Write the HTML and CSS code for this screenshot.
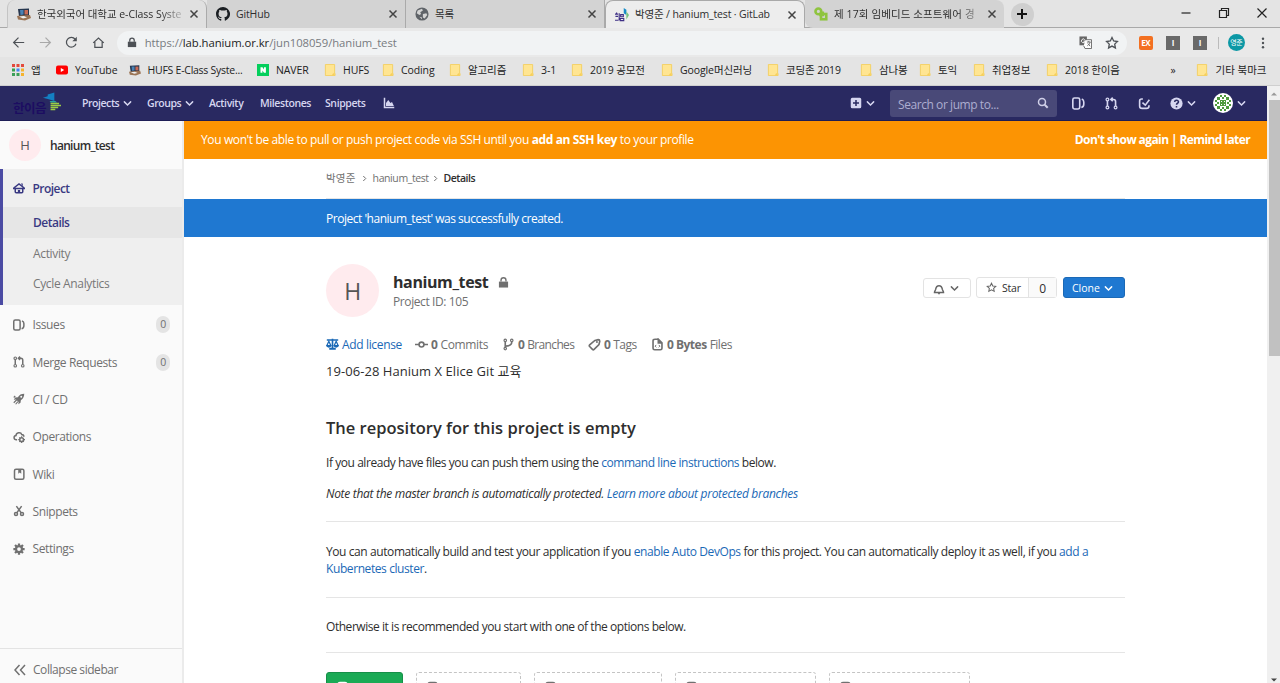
FILE: index.html
```html
<!DOCTYPE html>
<html lang="ko">
<head>
<meta charset="utf-8">
<title>박영준 / hanium_test · GitLab</title>
<link rel="stylesheet" href="styles.css">
</head>
<body>
<svg class="defs" width="0" height="0" aria-hidden="true">
  <symbol id="x" viewBox="0 0 10 10"><path d="M1.500 1.500l7 7M8.500 1.500l-7 7" class="ln w15"/></symbol>
  <symbol id="chev" viewBox="0 0 10 10"><path d="M1.500 3.200L5 6.700l3.500-3.500" class="ln round"/></symbol>
  <symbol id="right" viewBox="0 0 6 8"><path d="M1.500 1l3 3-3 3" class="ln"/></symbol>
  <symbol id="lock" viewBox="0 0 12 12"><path d="M1 5h10v6.500H1z"/><path d="M3.300 5V3.500a2.700 2.700 0 0 1 5.400 0V5" class="ln w15"/></symbol>
  <symbol id="folder" viewBox="0 0 12 13"><path d="M1 .5h10v9.500l.5.5v2H1z" fill="#ffe592" stroke="#f3cf61"/><path d="M9 10.500l2-1v3H8z" fill="#f6cf5c"/></symbol>
  <symbol id="hufs" viewBox="0 0 14 14"><path d="M1 2l11-.5V9L2 9.500z" fill="#26364e"/><path d="M3 3h3.500v4.500L3.500 8z" fill="#4a82b5"/><path d="M7.500 3H11v4.500H7.500z" fill="#c96a55"/><path d="M0 9l4-.5 9-.5 1 3-6 2.500-7-1z" fill="#9b7455"/><path d="M2 9.500l5-.5 3 1.500-4 1z" fill="#eee"/></symbol>
  <symbol id="issues" viewBox="0 0 16 16"><rect x="1" y="1.300" width="8.500" height="13.400" rx="2" class="ln w2"/><path d="M12 2.500c2.500 1 2.500 2 2.500 3.500v3c0 2-1 3.500-3 4" class="ln w2"/></symbol>
  <symbol id="merge" viewBox="0 0 16 16"><circle cx="3" cy="3" r="1.700" class="ln w15"/><circle cx="3" cy="13" r="1.700" class="ln w15"/><circle cx="13" cy="13" r="1.700" class="ln w15"/><path d="M3 5v6M13 11V5.500C13 4 12 3 10.500 3H8M9.500.800L7.200 3l2.300 2.200" class="ln w2"/></symbol>
  <symbol id="star" viewBox="0 0 16 16"><path d="M8 1.800l1.900 3.900 4.300.6-3.100 3 .8 4.300L8 11.500l-3.900 2.100.8-4.300-3.100-3 4.300-.6z" class="ln w15"/></symbol>
  <symbol id="doc" viewBox="0 0 16 16"><path d="M2 5c0-2 1-3 3-3h6c2 0 3 1 3 3v6c0 2-1 3-3 3H5c-2 0-3-1-3-3z" class="ln w2"/></symbol>
</svg>

<header class="chrome">
  <div class="tabs">
    <div class="tab first"><svg class="fav"><use href="#hufs"/></svg><span class="tt fade">한국외국어 대학교 e-Class Syste</span><svg class="cls"><use href="#x"/></svg></div>
    <div class="tab"><svg class="fav" viewBox="0 0 16 16"><path fill="#1b1f23" d="M8 0C3.580 0 0 3.580 0 8c0 3.540 2.290 6.530 5.470 7.590.4.070.55-.17.55-.38v-1.490c-2.010.37-2.530-.49-2.690-.94-.09-.23-.48-.94-.82-1.130-.28-.15-.68-.52-.01-.53.630-.01 1.080.58 1.230.82.72 1.210 1.870.87 2.330.66.07-.52.28-.87.51-1.070-1.780-.2-3.640-.89-3.640-3.950 0-.87.310-1.590.82-2.150-.08-.2-.36-1.020.080-2.120 0 0 .67-.21 2.200.82a7.600 7.600 0 0 1 4 0c1.530-1.040 2.200-.82 2.200-.82.44 1.100.16 1.920.08 2.120.51.56.82 1.270.82 2.150 0 3.070-1.870 3.750-3.650 3.950.29.25.54.73.54 1.480v2.200c0 .21.150.46.550.38A8 8 0 0 0 8 0z"/></svg><span class="tt">GitHub</span><svg class="cls"><use href="#x"/></svg></div>
    <div class="tab"><svg class="fav" viewBox="0 0 16 16"><circle cx="8" cy="8" r="7.500" fill="#5f6368"/><path d="M3 4l5-2 1 2-3 2 1 2-2 1-3-2zM9 8l4-1 1 2-3 4-2-1zM5 11l3 1v2z" fill="#d4d4d4"/></svg><span class="tt">목록</span><svg class="cls"><use href="#x"/></svg></div>
    <div class="tab active"><svg class="fav" viewBox="0 0 16 16"><path d="M0 7h3.500M1.800 5v2M.5 9.500h3M0 14h4M4.800 6v8M6.500 7.500h3v2.500h-3zM6 12h4v2.500H6z" fill="none" stroke="#3e2f85" stroke-width="1.300"/><path d="M10 0l3 2v6l-3-2z" fill="#178cc8"/><path d="M13 4l3 4-3 5z" fill="#78c27d"/></svg><span class="tt">박영준 / hanium_test · GitLab</span><svg class="cls"><use href="#x"/></svg></div>
    <div class="tab last"><svg class="fav" viewBox="0 0 16 16"><circle cx="5" cy="5" r="3.300" class="gr"/><rect x="8" y="8" width="6" height="6" class="gr"/><path d="M6 9h4V5" class="gr"/></svg><span class="tt fade">제 17회 임베디드 소프트웨어 경</span><svg class="cls"><use href="#x"/></svg></div>
    <div class="plus"><svg viewBox="0 0 12 12"><path d="M6 1v10M1 6h10" class="ln w2"/></svg></div>
    <div class="win"><svg viewBox="0 0 12 12"><path d="M1.500 6h9" class="ln"/></svg><svg viewBox="0 0 12 12"><path d="M1.500 3.500h7v7h-7zM3.500 3.500v-2h7v7h-2" class="ln"/></svg><svg viewBox="0 0 12 12"><path d="M1.500 1.500l9 9M10.500 1.500l-9 9" class="ln"/></svg></div>
  </div>
  <div class="toolbar">
    <svg class="tb" viewBox="0 0 16 16"><path d="M15 8H2M8 2L2 8l6 6" class="ln w15"/></svg>
    <svg class="tb dim" viewBox="0 0 16 16"><path d="M1 8h13M8 2l6 6-6 6" class="ln w15"/></svg>
    <svg class="tb" viewBox="0 0 16 16"><path d="M13.500 9.500A6 6 0 1 1 12.500 4" class="ln w15"/><path d="M14.500 1v5.500H9z"/></svg>
    <svg class="tb" viewBox="0 0 16 16"><path d="M1.500 8.500L8 2.500l6.500 6M3.500 7.500v6.500h9V7.500" class="ln w15"/></svg>
    <div class="omni"><svg class="lk"><use href="#lock"/></svg><span class="url">https://<b>lab.hanium.or.kr</b>/jun108059/hanium_test</span>
      <svg class="tr" viewBox="0 0 14 14"><rect x=".5" y=".5" width="8" height="9.500" fill="#666"/><path d="M7 4h6.500v9.500H6.500L5 10.500" fill="#fff" stroke="#666"/><path d="M6.200 4A2 2 0 1 0 6.600 5.500H4.800" fill="none" stroke="#fff"/><path d="M8.500 6.500h4M10.500 5.500v1M12 6.500c-.5 2-1.500 3-3 4M9.500 8l2.500 3" fill="none" stroke="#666"/></svg>
      <svg class="st"><use href="#star"/></svg></div>
    <span class="ext or">EX</span><span class="ext">I</span><span class="ext">I</span><i class="sep"></i><span class="me">영준</span><svg class="dots" viewBox="0 0 4 14"><circle cx="2" cy="2" r="1.400"/><circle cx="2" cy="7" r="1.400"/><circle cx="2" cy="12" r="1.400"/></svg>
  </div>
  <div class="marks">
    <div><svg viewBox="0 0 12 12"><path d="M0 0h3v3H0zM4.500 0h3v3h-3zM9 0h3v3H9z" fill="#e34a3d"/><path d="M0 4.500h3v3H0z" fill="#34a24f"/><path d="M4.500 4.500h3v3h-3z" fill="#4285f4"/><path d="M9 4.500h3v3H9zM9 9h3v3H9z" fill="#f5b32d"/><path d="M0 9h3v3H0zM4.500 9h3v3h-3z" fill="#3c9f59"/></svg>앱</div>
    <div><svg viewBox="0 0 12 12"><rect y="1.500" width="12" height="9" rx="2" fill="#f00"/><path d="M4.800 4v4L8.200 6z" fill="#fff"/></svg>YouTube</div>
    <div class="hu"><svg><use href="#hufs"/></svg>HUFS E-Class Syste...</div>
    <div><svg viewBox="0 0 12 12"><path d="M0 0h12v12H0z" fill="#04cf5c"/><path d="M3.500 3.200h2l1.500 2.300V3.200h1.900v5.600H7L5.400 6.500v2.300H3.500z" fill="#fff"/></svg>NAVER</div>
    <div><svg><use href="#folder"/></svg>HUFS</div>
    <div><svg><use href="#folder"/></svg>Coding</div>
    <div><svg><use href="#folder"/></svg>알고리즘</div>
    <div><svg><use href="#folder"/></svg>3-1</div>
    <div><svg><use href="#folder"/></svg>2019 공모전</div>
    <div><svg><use href="#folder"/></svg>Google머신러닝</div>
    <div><svg><use href="#folder"/></svg>코딩존 2019</div>
    <div><svg><use href="#folder"/></svg>삼나봉</div>
    <div><svg><use href="#folder"/></svg>토익</div>
    <div><svg><use href="#folder"/></svg>취업정보</div>
    <div><svg><use href="#folder"/></svg>2018 한이음</div>
    <div>»</div>
    <div class="other"><svg><use href="#folder"/></svg>기타 북마크</div>
  </div>
</header>

<div class="view">
  <div class="page">
    <nav class="navbar">
      <div class="logo"><span>한이음</span><svg viewBox="0 0 20 20"><path d="M1 5.500L6 4V2l7-2v9L7 7z" fill="#147fc2"/><path d="M8 9h6l2 1.500H9z" fill="#2aa39b"/><path d="M9 11.500h9M9 13.700h11M9 15.900h8M9 18h5" stroke="#9bcb45" stroke-width="1.600"/></svg></div>
      <a class="n1">Projects <svg><use href="#chev"/></svg></a>
      <a class="n2">Groups <svg><use href="#chev"/></svg></a>
      <a class="n3">Activity</a>
      <a class="n4">Milestones</a>
      <a class="n5">Snippets</a>
      <svg class="chart" viewBox="0 0 16 16"><path d="M1 1h2v12h12v2H1z"/><path d="M4 12V8l3-4 3 4 2-1.500 2.500 5.500z"/></svg>
      <div class="add"><svg viewBox="0 0 16 16"><path d="M3 1h10a2 2 0 0 1 2 2v10a2 2 0 0 1-2 2H3a2 2 0 0 1-2-2V3a2 2 0 0 1 2-2zm4 3v3H4v2h3v3h2V9h3V7H9V4z"/></svg><svg class="c"><use href="#chev"/></svg></div>
      <div class="search"><span>Search or jump to...</span><svg viewBox="0 0 12 12"><circle cx="5" cy="5" r="3.500" class="ln w15"/><path d="M7.700 7.700l3 3" class="ln w2"/></svg></div>
      <div class="icons">
        <svg><use href="#issues"/></svg><svg><use href="#merge"/></svg>
        <svg viewBox="0 0 16 16"><path d="M6 2.500H4.500c-2 0-2.500 1-2.500 2.500v6c0 2 1 3 3 3h5.500c2 0 3-1 3-3v-1M5.500 7l3.500 3 5-6.500" class="ln w2"/></svg>
        <svg viewBox="0 0 16 16"><circle cx="8" cy="8" r="7.500"/><path d="M5.700 6.200c.2-3 4.900-2.700 4.700 0C10.300 7.800 8 7.600 8 9.500M8 11v1.800" fill="none" stroke="#292961" stroke-width="1.900"/></svg>
        <svg class="c"><use href="#chev"/></svg>
        <svg class="av" viewBox="0 0 20 20"><circle cx="10" cy="10" r="10" fill="#fff"/><path d="M7 2h2v2H7zM11 2h2v2h-2zM2 7h2v2H2zM2 11h2v2H2zM16 7h2v2h-2zM16 11h2v2h-2zM7 16h2v2H7zM11 16h2v2h-2zM7 7h6v6H7zM4 4h3v3H4zM13 4h3v3h-3zM4 13h3v3H4zM13 13h3v3h-3zM9 4h2v2H9zM9 14h2v2H9zM4 9h2v2H4zM14 9h2v2h-2z" fill="#4f9a3e"/><path d="M8 8h1v1H8zM11 8h1v1h-1zM8 11h1v1H8zM11 11h1v1h-1z" fill="#fff"/></svg>
        <svg class="c"><use href="#chev"/></svg>
      </div>
    </nav>
    <div class="body">
      <aside>
        <div class="ctx"><span class="ava">H</span><b>hanium_test</b></div>
        <div class="sect">
          <a class="top"><svg viewBox="0 0 16 16"><path d="M0 8.500h16M1 8l7-5.500L15 8M3 8v5q0 1.300 1.300 1.300h7.400Q13 14.300 13 13V8" class="ln w2"/><path d="M6.500 10.500h3v3.500h-3zM10.500 2H13v4z"/></svg>Project</a>
          <a class="sub on">Details</a><a class="sub">Activity</a><a class="sub">Cycle Analytics</a>
        </div>
        <a class="item"><svg><use href="#issues"/></svg>Issues<i>0</i></a>
        <a class="item"><svg><use href="#merge"/></svg>Merge Requests<i>0</i></a>
        <a class="item"><svg viewBox="0 0 16 16"><path d="M15 1c-4 0-6.500 1.500-8.500 4.500L3 6 1 9l3-.5L7.500 12 7 15l3-2 .5-3.500C13.500 7.500 15 5 15 1zm-4 2.700a1.300 1.300 0 1 1 0 2.600 1.300 1.300 0 0 1 0-2.600z"/><path d="M1 13l4-4M3.500 15l3-3.500M1 6l2-2" class="ln w15"/></svg>CI / CD</a>
        <a class="item"><svg viewBox="0 0 16 16"><path d="M5.500 11.500H4.500C.5 11.500.5 6.500 4 6c0-4 6.500-5 7.500-1.500 2 0 3 1 3 3" class="ln w2"/><circle cx="11.500" cy="11.500" r="2.500" class="ln w2"/><path d="M11.500 7v2M11.500 14v2M7 11.500h2M14 11.500h2M8.500 8.500l1 1M13.500 13.500l1 1M8.500 14.500l1-1" class="ln w15"/></svg>Operations</a>
        <a class="item"><svg viewBox="0 0 16 16"><rect x="2" y="1.500" width="12.500" height="13.500" rx="2" class="ln w2"/><path d="M7 2h4v5.500L9 6 7 7.500z"/></svg>Wiki</a>
        <a class="item"><svg viewBox="0 0 16 16"><circle cx="4" cy="12" r="2" class="ln w2"/><circle cx="12" cy="12" r="2" class="ln w2"/><path d="M5 10.500L11.500 1.500M11 10.500L4.500 1.500" class="ln w2"/></svg>Snippets</a>
        <a class="item"><svg viewBox="0 0 16 16"><circle cx="8" cy="8" r="4" class="ln w3"/><path d="M8 .5v3M8 12.500v3M.5 8h3M12.500 8h3M2.700 2.700l2 2M11.300 11.300l2 2M2.700 13.300l2-2M11.300 4.700l2-2" class="ln w3"/></svg>Settings</a>
        <a class="collapse"><svg viewBox="0 0 12 12"><path d="M5.500 1L1 6l4.500 5M11 1L6.500 6l4.500 5" class="ln w15"/></svg>Collapse sidebar</a>
      </aside>
      <main>
        <div class="ssh"><span>You won't be able to pull or push project code via SSH until you <b>add an SSH key</b> to your profile</span><b class="rm">Don't show again | Remind later</b></div>
        <div class="crumbs"><span>박영준</span><svg><use href="#right"/></svg><span>hanium_test</span><svg><use href="#right"/></svg><b>Details</b></div>
        <div class="flash">Project 'hanium_test' was successfully created.</div>
        <div class="content">
          <div class="head">
            <span class="big">H</span>
            <div class="ttl"><h1>hanium_test <svg><use href="#lock"/></svg></h1><p>Project ID: 105</p></div>
            <div class="btns">
              <span class="btn bell"><svg viewBox="0 0 16 16"><path d="M2 12.500c0-1.500 1-2 1.500-4C4 5.500 5.500 3.500 8 3.500s4 2 4.500 5c.5 2 1.500 2.500 1.500 4z" class="ln w2"/><path d="M6 13h4l-2 2.500z"/></svg><svg class="c"><use href="#chev"/></svg></span>
              <span class="btn star"><svg><use href="#star"/></svg><em>Star</em><i>0</i></span>
              <span class="btn clone">Clone <svg class="c"><use href="#chev"/></svg></span>
            </div>
          </div>
          <div class="stats">
            <span class="lic"><svg viewBox="0 0 16 16"><path d="M1 1.500h14v2H1zM7 1h2v11h3v2.500H4V12h3z"/><path d="M3.500 4L1 9.500h5zM12.500 4L10 9.500h5z" class="ln w15"/><path d="M0 9h7q-1 3-3.500 3T0 9zM9 9h7q-1 3-3.500 3T9 9z"/></svg>Add license</span>
            <span class="com"><svg viewBox="0 0 16 16"><circle cx="8" cy="8" r="3" class="ln w2"/><path d="M0 8h5M11 8h5" class="ln w2"/></svg><b>0</b> Commits</span>
            <span class="bra"><svg viewBox="0 0 16 16"><circle cx="4" cy="3" r="1.500" class="ln w15"/><circle cx="12" cy="3" r="1.500" class="ln w15"/><circle cx="4" cy="13" r="1.500" class="ln w15"/><path d="M4 5v6M4 10c5 0 8-2 8-5" class="ln w2"/></svg><b>0</b> Branches</span>
            <span class="tag"><svg viewBox="0 0 16 16"><path d="M8.500 3l4-1q2 0 2 2l-1 4-6 6q-1 1-2 0L2 10.500q-1-1 0-2z" class="ln w2"/><circle cx="11" cy="5" r="1.200"/></svg><b>0</b> Tags</span>
            <span class="fil"><svg viewBox="0 0 16 16"><path d="M9 1.500H5q-2.500 0-2.500 2v9q0 2 2 2h7q2 0 2-2V6L9 1.500V6h4" class="ln w2"/><path d="M6.500 8.500L5 10l1.500 1.500M9.500 8.500L11 10l-1.500 1.500" class="ln"/></svg><b>0 Bytes</b> Files</span>
          </div>
          <p class="desc">19-06-28 Hanium X Elice Git 교육</p>
          <h2>The repository for this project is empty</h2>
          <p class="p1">If you already have files you can push them using the <a>command line instructions</a> below.</p>
          <p class="p2">Note that the master branch is automatically protected. <a>Learn more about protected branches</a></p>
          <p class="p3">You can automatically build and test your application if you <a>enable Auto DevOps</a> for this project. You can automatically deploy it as well, if you <a>add a<br>Kubernetes cluster</a>.</p>
          <p class="p4">Otherwise it is recommended you start with one of the options below.</p>
          <div class="opts">
            <span class="new"><svg><use href="#doc"/></svg>New file</span>
            <span><svg><use href="#doc"/></svg>Add README</span>
            <span><svg><use href="#doc"/></svg>Add CHANGELOG</span>
            <span><svg><use href="#doc"/></svg>Add CONTRIBUTING</span>
            <span><svg><use href="#doc"/></svg>Add Kubernetes</span>
          </div>
        </div>
      </main>
    </div>
  </div>
  <div class="scroll"><svg viewBox="0 0 8 5"><path d="M0 4.500L4 .5l4 4z"/></svg><div></div><svg class="dn" viewBox="0 0 8 5"><path d="M0 .5l4 4 4-4z"/></svg></div>
</div>
</body>
</html>
```
FILE: styles.css
```css
* { box-sizing: border-box; }
html, body { margin: 0; height: 683px; overflow: hidden; }
body { font: 12px/17px "Open Sans", "Noto Sans CJK KR", sans-serif; color: #2e2e2e; letter-spacing: -.4px; background: #fff; display: flex; flex-direction: column; }
.defs { position: absolute; }
svg { fill: currentColor; flex: none; }
.ln { fill: none; stroke: currentColor; stroke-width: 1.2; }
.round { stroke-width: 1.6; stroke-linecap: round; }
.w15 { stroke-width: 1.5; }
.w2 { stroke-width: 2; }
.w3 { stroke-width: 3; }
.gr { fill: none; stroke: #8fc43f; stroke-width: 3; }
p, h1, h2 { margin: 0; }
i, em { font-style: normal; }

.chrome { height: 86px; flex: none; background: #e4e4e4; border-bottom: 1px solid #cfcfcf; }
.tabs { height: 28px; display: grid; grid-template-columns: 200px 199px 199px 200px 199px 36px 1fr; padding-left: 7px; border-bottom: 1px solid #a9a9a9; }
.tab { display: grid; grid-template-columns: 14px 1fr 10px; column-gap: 6px; align-items: center; padding: 0 7px 0 9px; background: #d3d3d3; border-right: 1px solid #aaa; font-size: 10.5px; letter-spacing: -.1px; }
.tab.first { background: #e0e0e0; border-left: 1px solid #c4c4c4; border-radius: 8px 8px 0 0; }
.tab.active { background: #ededed; border: 1px solid #a9a9a9; border-bottom: 0; border-radius: 8px 8px 0 0; height: 28px; }
.tab.last { border-radius: 0 8px 0 8px; border: 0; }
.fav { width: 14px; height: 14px; }
.tt { white-space: nowrap; letter-spacing: -.15px; }
.first .tt { letter-spacing: -.05px; }
.last .tt { letter-spacing: .1px; }
.fade { -webkit-mask-image: linear-gradient(90deg, #000 84%, transparent 104%); mask-image: linear-gradient(90deg, #000 84%, transparent 104%); }
.cls { width: 10px; height: 10px; color: #444; }
.plus { align-self: center; justify-self: center; width: 23px; height: 23px; border-radius: 50%; background: #cfcfcf; display: grid; place-items: center; color: #111; }
.plus svg { width: 12px; height: 12px; }
.win { display: flex; justify-content: flex-end; gap: 26px; padding: 7px 12px 0 0; color: #222; }
.win svg { width: 12px; height: 12px; }
.toolbar { height: 29px; display: flex; align-items: center; padding: 0 12px; color: #4d5156; background: #e9e9e9; }
.tb { width: 13px; height: 13px; margin-right: 13.7px; }
.tb.dim { color: #a8a8a8; }
.omni { width: 1010px; height: 24px; border-radius: 12px; background: #f1f3f4; display: flex; align-items: center; padding: 0 8px; margin-left: -2px; }
.lk { width: 10px; height: 11px; margin-left: 2px; }
.url { margin-left: 8px; font-size: 11.3px; color: #777b80; letter-spacing: -.06px; flex: 1; }
.url b { font-weight: 400; color: #222; }
.tr { width: 13px; height: 13px; margin-right: 13px; }
.st { width: 14px; height: 14px; }
.ext { width: 14px; height: 14px; background: #696969; color: #fff; font: bold 8px/14px "Open Sans", sans-serif; text-align: center; margin-left: 13px; }
.ext.or { background: #f37021; border-radius: 2px; margin-left: 12px; }
.sep { width: 1px; height: 12px; background: #bbb; margin-left: 11px; }
.me { width: 17px; height: 17px; border-radius: 50%; background: #0c98a5; color: #fff; font-size: 7px; line-height: 17px; text-align: center; margin-left: 9px; }
.dots { width: 4px; height: 12px; margin-left: 16px; }
.marks { height: 26px; display: grid; grid-template-columns: 44px 72.500px 128.500px 67px 58px 67px 73px 49px 90px 106px 93px 59px 54px 73px 124.500px 25px 1fr; padding-left: 12px; font-size: 10.5px; color: #222; letter-spacing: -.1px; }
.marks div { display: flex; align-items: center; gap: 7px; white-space: nowrap; }
.marks svg { width: 12px; height: 12px; }
.marks .hu { letter-spacing: -.25px; }
.marks .other { gap: 8px; letter-spacing: 0; }

.view { flex: 1; display: flex; min-height: 0; }
.page { width: 1267px; display: flex; flex-direction: column; }
.navbar { height: 35px; flex: none; background: #292961; color: #d6d6f0; display: flex; align-items: center; font-size: 10.5px; font-weight: 600; letter-spacing: -.25px; border-bottom: 1px solid #1d1d55; }
.navbar a { display: flex; align-items: center; justify-content: space-between; white-space: nowrap; }
.navbar a svg, .c { width: 9px; height: 9px; }
.logo { width: 82px; padding: 3px 0 0 13px; display: flex; }
.logo span { font: 700 12.500px/18px "Noto Sans CJK KR", sans-serif; color: #1c0d61; letter-spacing: -.5px; width: 33px; white-space: nowrap; padding-top: 7px; }
.logo svg { width: 19px; height: 20px; margin-left: -4px; }
.n1 { width: 49px; margin-right: 16px; letter-spacing: -.45px; }
.n2 { width: 46px; margin-right: 16px; letter-spacing: -.45px; }
.n3 { width: 34px; margin-right: 17px; letter-spacing: -.4px; }
.n4 { width: 49px; margin-right: 16px; letter-spacing: -.4px; }
.n5 { width: 40px; margin-right: 18px; letter-spacing: -.4px; }
.navbar .n1 svg, .navbar .n2 svg { margin-right: -1px; width: 9px; }
.chart { width: 12px; height: 12px; }
.add { margin-left: 455px; display: flex; gap: 4px; align-items: center; width: 40px; }
.add svg { width: 12px; height: 12px; }
.add .c { width: 9px; height: 9px; }
.search { width: 167px; height: 27px; background: #494978; border-radius: 3px; display: flex; align-items: center; justify-content: space-between; padding: 2px 8px 0; font-weight: 400; font-size: 12px; letter-spacing: -.43px; color: #adadd0; }
.search svg { width: 12px; height: 12px; color: #d0d0e8; margin-bottom: 2px; }
.icons { display: flex; align-items: center; margin-left: 15px; }
.icons svg { width: 13px; height: 13px; margin-right: 20px; }
.icons svg:nth-child(3) { margin-right: 19px; }
.icons svg:nth-child(4) { margin-right: 4px; }
.icons .c { width: 9px; height: 9px; margin-right: 17px; }
.icons .av { width: 20px; height: 20px; margin-right: 4px; }

.body { flex: 1; display: flex; min-height: 0; }
aside { width: 184px; flex: none; background: #fafafa; border-right: 2px solid #ebebeb; color: #707070; letter-spacing: -.4px; display: flex; flex-direction: column; }
.ctx { height: 48px; flex: none; display: flex; align-items: center; padding-left: 9px; gap: 9px; color: #2e2e2e; letter-spacing: -.7px; }
.ctx b { font-weight: 600; }
.ava, .big { border-radius: 50%; background: #ffebee; color: #555; display: grid; place-items: center; }
.ava { width: 32px; height: 32px; font-size: 13px; letter-spacing: 0; }
.sect { background: #efefef; border-left: 3px solid #4b4ba3; height: 136px; flex: none; color: #393982; }
.top { height: 38px; display: flex; align-items: center; gap: 7.5px; padding-left: 10px; font-weight: 600; letter-spacing: -.55px; }
.top svg, .item svg { width: 12px; height: 12px; }
.sub { height: 30.700px; display: flex; align-items: center; padding-left: 30px; color: #777; letter-spacing: -.35px; }
.sub.on { background: #e6e6e6; color: #393982; font-weight: 600; letter-spacing: -.5px; }
.item { height: 37.350px; flex: none; display: flex; align-items: center; gap: 7.5px; padding: 2px 12px 0 13px; }
.item i { margin-left: auto; width: 14px; height: 17px; border-radius: 8px; background: #e4e4e4; font-size: 10.5px; text-align: center; }
.collapse { margin-top: auto; height: 35px; flex: none; border-top: 1px solid #e3e3e3; display: flex; align-items: center; padding: 7px 0 0 14px; gap: 7px; letter-spacing: -.45px; }
.collapse svg { width: 12px; height: 12px; }

main { flex: 1; overflow: hidden; }
.ssh { height: 38px; background: #fc9403; color: #fff; display: flex; align-items: center; justify-content: space-between; padding: 0 17px 2px; letter-spacing: -.38px; }
.rm { letter-spacing: -.6px; }
.crumbs { height: 40px; margin-right: 142px; margin-left: 142px; display: flex; align-items: center; gap: 6px; font-size: 10.5px; letter-spacing: -.4px; color: #707070; border-bottom: 1px solid #e5e5e5; }
.crumbs span:first-child { letter-spacing: .2px; }
.crumbs span:nth-child(3) { width: 54px; white-space: nowrap; }
.crumbs svg { width: 5px; height: 7px; }
.crumbs b { color: #2e2e2e; font-weight: 600; letter-spacing: -.5px; }
.flash { height: 38px; background: #1f78d1; color: #fff; padding: 1px 142px 0; line-height: 38px; letter-spacing: -.48px; }
.content { width: 799px; margin-left: 142px; }
.head { display: flex; padding-top: 27px; height: 97px; }
.big { width: 53px; height: 53px; font-size: 23px; padding-top: 2px; }
.ttl { padding: 6px 0 0 14px; flex: 1; color: #707070; }
h1 { font-size: 16px; line-height: 24px; font-weight: 700; letter-spacing: -.4px; color: #2e2e2e; }
h1 svg { width: 11px; height: 11px; margin-left: 6px; color: #707070; }
.ttl p { line-height: 16px; }
.btns { display: flex; font-size: 10.5px; letter-spacing: -.2px; padding-top: 13px; align-items: flex-start; }
.btn { height: 21px; border: 1px solid #e3e3e3; border-radius: 3px; display: flex; align-items: center; padding-top: 1px; }
.bell { width: 48px; justify-content: space-between; padding: 1px 11px 0 9px; color: #666; margin-right: 5px; margin-top: 1px; height: 20px; }
.bell svg:first-child { width: 12px; height: 12px; }
.star { width: 81px; margin-right: 6px; padding: 0; }
.star svg { width: 11px; height: 11px; margin: 0 5px 0 9px; color: #666; }
.star em { flex: 1; padding-top: 2px; }
.star i { width: 28px; height: 19px; line-height: 21px; border-left: 1px solid #e3e3e3; background: #fafafa; text-align: center; font-size: 12px; }
.clone { width: 62px; background: #1f78d1; border-color: #1b69b6; color: #fff; justify-content: space-between; padding: 2px 11px 0 8px; letter-spacing: 0; }
.stats { height: 21px; display: flex; align-items: center; color: #707070; white-space: nowrap; letter-spacing: -.35px; }
.stats span { display: flex; align-items: center; gap: 3px; }
.stats svg { width: 13px; height: 13px; }
.stats b { font-weight: 700; }
.lic { width: 89px; color: #1b69b6; }
.com { width: 87px; }
.bra { width: 86px; letter-spacing: -.65px; }
.tag { width: 63px; letter-spacing: -.55px; }
.fil { letter-spacing: -.5px; }
.desc { line-height: 17px; padding-top: 8px; height: 55px; font-size: 13px; letter-spacing: .05px; }
h2 { font-size: 16.500px; font-weight: 600; height: 44px; line-height: 22px; padding-top: 7px; letter-spacing: 0; }
a { color: inherit; }
p a { color: #1b69b6; }
.p1 { height: 30px; letter-spacing: -.44px; }
.p2 { height: 38px; padding-top: 1px; font-style: italic; border-bottom: 1px solid #e5e5e5; white-space: nowrap; letter-spacing: -.3px; }
.p3 { height: 76px; padding-top: 21px; line-height: 17px; border-bottom: 1px solid #e5e5e5; white-space: nowrap; letter-spacing: -.41px; }
.p4 { height: 55px; padding-top: 20px; border-bottom: 1px solid #e5e5e5; letter-spacing: -.45px; }
.opts { margin-top: 19px; display: grid; grid-template-columns: 77px 105px 128px 141px 141px; column-gap: 13px; color: #707070; font-size: 10.5px; }
.opts span { height: 30px; border: 1px dashed #c4c4c4; border-radius: 3px; padding: 7px 9px 0; display: flex; gap: 4px; align-items: flex-start; white-space: nowrap; line-height: 14px; }
.opts .new { background: #1aaa55; color: #fff; border: 1px solid #168f48; }
.opts svg { width: 13px; height: 12px; margin-top: 1px; }
.scroll { width: 13px; background: #f0f0f0; color: #999; display: flex; flex-direction: column; align-items: center; padding-top: 6px; }
.scroll svg { width: 6px; height: 4px; }
.scroll div { width: 11px; height: 256px; background: #c1c1c1; margin: 4px 0 auto 2px; }
.scroll .dn { color: #444; margin-bottom: 1px; }
```
